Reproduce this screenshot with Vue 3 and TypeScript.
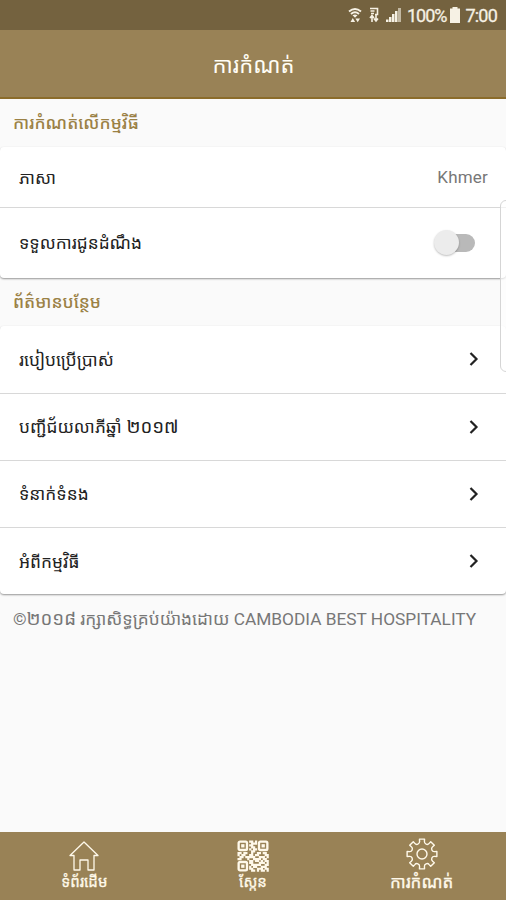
<script setup lang="ts">
interface Link { id: string; text: string; year?: string }

const links: Link[] = [
  { id: 'use', text: 'របៀបប្រើប្រាស់' },
  { id: 'winners', text: 'បញ្ជីជ័យលាភីឆ្នាំ', year: '២០១៧' },
  { id: 'contact', text: 'ទំនាក់ទំនង' },
  { id: 'about', text: 'អំពីកម្មវិធី' },
]

// Modules between the three finder squares, on a 16 by 16 grid.
const qr: string[] = [
  '......1101......',
  '......0111......',
  '......1100......',
  '......0110......',
  '......1011......',
  '......0110......',
  '1101100100110110',
  '1011001101100011',
  '0110111110011101',
  '1100010011110110',
  '......1101101011',
  '......1100011101',
  '......0111110011',
  '......1011001110',
  '......1100111011',
  '......0110101101',
]
const qrPath: string = qr
  .map((row, y) => [...row].map((c, x) => (c === '1' ? `M${x} ${y}h1.15v1.15h-1.15z` : '')).join(''))
  .join('')
const finders: [number, number][] = [[0, 0], [10.5, 0], [0, 10.5]]

// Eight teeth joined by round notches that bite into the wheel.
const gear: string = (() => {
  const at = (a: number, r: number): string =>
    `${(16 + r * Math.cos(a)).toFixed(2)} ${(16 + r * Math.sin(a)).toFixed(2)}`
  const step = Math.PI / 4
  let d = ''
  for (let i = 0; i < 8; i++) {
    const a = i * step - Math.PI / 2
    d += `${i ? 'L' : 'M'}${at(a - 0.19, 12.8)}L${at(a - 0.17, 15.1)}L${at(a + 0.17, 15.1)}L${at(a + 0.19, 12.8)}`
    d += `A2.7 2.7 0 0 0 ${at(a + step - 0.19, 12.8)}`
  }
  return d + 'Z'
})()
</script>

<template>
  <div class="screen">
    <div class="status">
      <svg class="wifi" viewBox="0 0 14 16">
        <path d="M1 4.500Q7-.5 13 4.500M3 7Q7 3.500 11 7" fill="none" stroke="currentColor" stroke-width="1.900" />
        <path d="M4.500 8.300Q7 6.500 9.500 8.300L7 10.800zM2.500 15l2.300-4 2.300 4zM7.400 11.500h4.600l-2.300 3.700z" fill="currentColor" />
      </svg>
      <svg class="data" viewBox="0 0 10 16">
        <path d="M1 1.500h7.500v6H6M1.500 4h4M2 6.500h3M3 15V8M1 11l2-2.500 2 2.500M7 7v7M5 11.500l2 2.500 2-2.500" fill="none" stroke="currentColor" stroke-width="1.600" />
      </svg>
      <svg class="signal" viewBox="0 0 16 16">
        <path d="M0 15v-2.500h2.500v2.500zM3 15v-5h2.500v5zM6 15V7h2.500v8zM9 15V4h2.500v11z" fill="currentColor" />
        <path d="M12 15V1h3v14z" fill="currentColor" opacity=".6" />
      </svg>
      <span class="percent">100%</span>
      <svg class="battery" viewBox="0 0 10 16"><path d="M2.500 0h5v1.500H10V16H0V1.500h2.500z" fill="currentColor" /></svg>
      <span class="clock">7:00</span>
    </div>
    <header class="bar"><h1>ការកំណត់</h1></header>

    <main>
      <h2 class="first">ការកំណត់លើកម្មវិធី</h2>
      <section class="card">
        <div class="row language"><span>ភាសា</span><span class="value">Khmer</span></div>
        <div class="row notify"><span>ទទួលការជូនដំណឹង</span><span class="switch"><i></i></span></div>
      </section>
      <h2 class="second">ព័ត៌មានបន្ថែម</h2>
      <section class="card">
        <div v-for="l in links" :key="l.id" class="row link">
          <span>{{ l.text }}<span v-if="l.year" class="year">&nbsp;{{ l.year }}</span></span>
          <svg class="chevron" viewBox="0 0 10 16"><path d="M1.500 2l6 6-6 6" fill="none" stroke="currentColor" stroke-width="2.200" /></svg>
        </div>
      </section>
      <p class="copy">©<span class="year">២០១៨</span> រក្សាសិទ្ធគ្រប់យ៉ាងដោយ CAMBODIA BEST HOSPITALITY</p>
    </main>
    <div class="edge"></div>

    <nav>
      <div class="tab home">
        <svg class="icon" viewBox="0 0 32 32">
          <path d="M2 15.500L16 2l14 13.500h-4V30h-6V20h-8v10H6V15.500z" fill="none" stroke="currentColor" stroke-width="1.300" stroke-linejoin="round" />
        </svg>
        <span>ទំព័រដើម</span>
      </div>
      <div class="tab scan">
        <svg class="icon" viewBox="-.25 -.25 16.5 16.5">
          <path :d="qrPath" fill="currentColor" />
          <g v-for="[x, y] in finders" :key="`${x}-${y}`" :transform="`translate(${x} ${y})`">
            <rect x=".6" y=".6" width="4.300" height="4.300" rx=".7" fill="none" stroke="currentColor" stroke-width="1.200" />
            <rect x="1.900" y="1.900" width="1.700" height="1.700" fill="currentColor" />
          </g>
        </svg>
        <span>ស្កែន</span>
      </div>
      <div class="tab settings">
        <svg class="icon" viewBox="0 0 32 32">
          <path :d="gear" fill="none" stroke="currentColor" stroke-width="1.400" stroke-linejoin="round" />
          <circle cx="16" cy="16" r="5" fill="none" stroke="currentColor" stroke-width="1.400" />
        </svg>
        <span>ការកំណត់</span>
      </div>
    </nav>
  </div>
</template>

<style>
body { margin: 0; }
</style>

<style scoped>
.screen { position: relative; display: flex; flex-direction: column; width: 506px; height: 900px; overflow: hidden; background: #fafafa; font-family: Roboto, "Noto Sans Khmer", "Khmer OS", "Noto Sans", sans-serif; }
.status { display: flex; align-items: center; justify-content: flex-end; box-sizing: border-box; height: 30px; padding-right: 9px; background: #74623f; color: #f6f1e4; font-size: 18px; }
.wifi { width: 14px; height: 16px; margin-right: 7px; }
.data { width: 10px; height: 16px; margin-right: 7px; }
.signal { width: 16px; height: 16px; margin-right: 5px; }
.battery { width: 10px; height: 16px; margin: 0 5px 0 4px; }
.percent, .clock { white-space: nowrap; letter-spacing: -1px; -webkit-text-stroke: .3px currentColor; }
.clock { letter-spacing: -.8px; }
.bar { display: flex; align-items: center; justify-content: center; box-sizing: border-box; height: 69px; background: #998256; border-bottom: 2px solid #8b6c2b; color: #fffdf5; }
h1 { margin: 0; padding-left: 1px; font-size: 22px; font-weight: 400; white-space: nowrap; }
main { flex: 1; min-height: 0; }
h2 { display: flex; align-items: center; box-sizing: border-box; margin: 0; padding: 0 0 1px 13px; font-size: 17.2px; font-weight: 500; color: #9b8145; white-space: nowrap; }
.first { height: 48px; }
.second { height: 47.500px; }
.card { background: #fff; border-radius: 4px; box-shadow: 0 1px 2px rgba(0, 0, 0, .4); }
.row { display: flex; align-items: center; justify-content: space-between; box-sizing: border-box; padding: 0 18px 0 19px; font-size: 17.3px; color: #222; white-space: nowrap; }
.row + .row { border-top: 1px solid #d8d8d8; }
.language { height: 60px; }
.notify { height: 71px; padding-right: 31px; padding-bottom: 1px; }
.link { height: 67.2px; padding-right: 27px; }
.year { font-size: 18.6px; line-height: 1; }
.value { color: #777; font-size: 17px; letter-spacing: .2px; }
.chevron { width: 10px; height: 16px; }
.switch { display: flex; align-items: center; width: 32px; height: 18px; border-radius: 9px; background: #b9b9b9; }
.switch i { flex: none; width: 25px; height: 25px; margin-left: -9px; border-radius: 50%; background: #ececec; box-shadow: 0 1px 2px rgba(0, 0, 0, .25); }
.copy { margin: 0; padding: 15px 13px; font-size: 17.3px; line-height: 20px; color: #777; white-space: nowrap; }
.edge { position: absolute; top: 200px; right: -6px; width: 10px; height: 170px; border: 1px solid #d5d5d5; border-radius: 6px; background: rgba(255, 255, 255, .65); }
nav { display: grid; grid-template-columns: repeat(3, 1fr); height: 68px; background: #998256; color: #fff9ea; }
.tab { display: flex; flex-direction: column; align-items: center; padding-top: 8px; font-size: 15px; line-height: 20px; white-space: nowrap; -webkit-text-stroke: .3px currentColor; }
.settings { padding-top: 6px; font-size: 17px; line-height: 24px; }
.icon { width: 32px; height: 32px; }
</style>
